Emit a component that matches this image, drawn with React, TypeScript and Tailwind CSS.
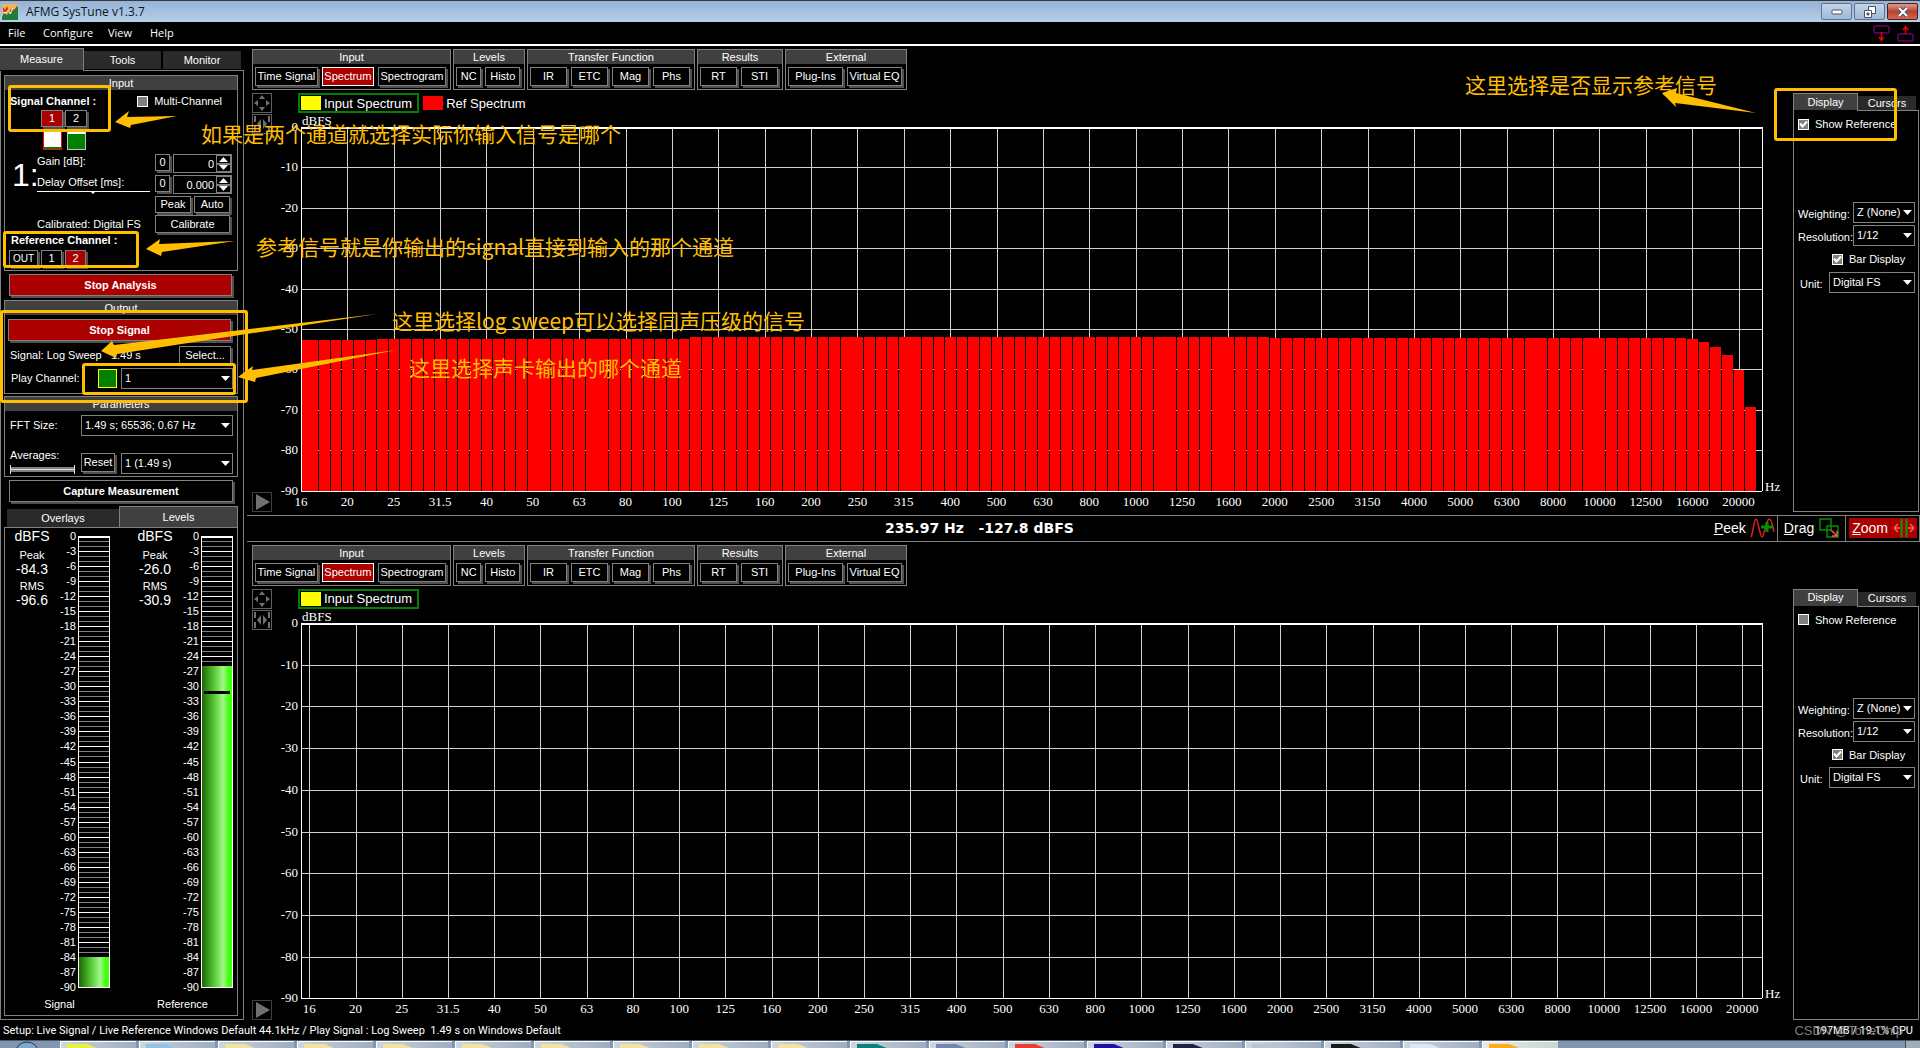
import React, { useId } from "react";

const FREQS = [
  "16", "20", "25", "31.5", "40", "50", "63", "80", "100", "125", "160", "200", "250", "315", "400", "500",
  "630", "800", "1000", "1250", "1600", "2000", "2500", "3150", "4000", "5000", "6300", "8000", "10000",
  "12500", "16000", "20000",
];

const TOOL_GROUPS = [
  { title: "Input", width: "w-[199px]", button: "flex-auto", buttons: ["Time Signal", "Spectrum", "Spectrogram"] },
  { title: "Levels", width: "w-[72px]", button: "flex-auto", buttons: ["NC", "Histo"] },
  { title: "Transfer Function", width: "w-[168px]", button: "flex-1", buttons: ["IR", "ETC", "Mag", "Phs"] },
  { title: "Results", width: "w-[86px]", button: "flex-1", buttons: ["RT", "STI"] },
  { title: "External", width: "w-[122px]", button: "flex-1", buttons: ["Plug-Ins", "Virtual EQ"] },
];

// 1/12 octave levels in dBFS, the band rolls off at the top end
const ROLL_OFF = [-52.5, -53.2, -54.5, -56.5, -60.2, -69.3];
const REF_LEVELS = Array.from({ length: 126 }, (_, i) => {
  if (i >= 120) return ROLL_OFF[i - 120];
  if (i < 7) return -52.8;
  if (i < 34) return -52.4;
  return i < 84 ? -52.1 : -52.3;
});

type ButtonProps = {
  children: React.ReactNode;
  active?: boolean;
  className?: string;
};

function Button({ children, active = false, className = "" }: ButtonProps) {
  return (
    <button
      type="button"
      className={`flex items-center justify-center whitespace-nowrap border border-[#808080] leading-none shadow-[2px_2px_0_#505050] ${
        active ? "bg-[#aa0000]" : "bg-black"
      } ${className}`}
    >
      {children}
    </button>
  );
}

type SelectProps = {
  id: string;
  value: string;
  className?: string;
};

function Select({ id, value, className = "" }: SelectProps) {
  return (
    <span className={`relative block h-[21px] ${className}`}>
      <select
        id={id}
        defaultValue={value}
        className="block h-full w-full appearance-none border border-[#808080] bg-black pl-[3px] text-[11px] leading-none text-white"
      >
        <option>{value}</option>
      </select>
      <svg className="pointer-events-none absolute right-[3px] top-[8px]" width="9" height="5" viewBox="0 0 9 5">
        <path d="M0 0h9L4.500 5z" fill="#fff" />
      </svg>
    </span>
  );
}

function Checkbox({ label, checked = false }: { label: string; checked?: boolean }) {
  return (
    <label className="flex items-center gap-[6px] whitespace-nowrap">
      <span className="relative block size-[11px]">
        <input
          type="checkbox"
          defaultChecked={checked}
          className="peer block size-[11px] appearance-none border border-white bg-[#808080]"
        />
        <svg
          className="pointer-events-none absolute left-0 top-0 hidden peer-checked:block"
          width="11"
          height="11"
          viewBox="0 0 11 11"
        >
          <path d="M2 4.500l2.500 3 4.500-5" fill="none" stroke="#fff" strokeWidth="2" />
        </svg>
      </span>
      {label}
    </label>
  );
}

function Group({ title, className = "", children }: { title: string; className?: string; children: React.ReactNode }) {
  return (
    <fieldset className={`min-w-0 border border-[#808080] ${className}`}>
      <div className="h-[14px] bg-[#404040] text-center leading-[14px]">{title}</div>
      {children}
    </fieldset>
  );
}

function TitleBar() {
  return (
    <header className="flex h-[22px] shrink-0 items-center border-t border-[#3a3a3a] bg-linear-to-b from-[#96b3d6] to-[#b6cfe9] pl-[2px] font-['Open_Sans',sans-serif] text-[12px] text-[#10151c]">
      <svg width="16" height="16" viewBox="0 0 16 16">
        <rect width="16" height="16" rx="2" fill="#f3b25c" />
        <path d="M1 3l2 3 2-4 2 6 2-3 2 2 4-5v6H1z" fill="#d3321d" />
        <path d="M0 13l2-4 3 2 2-4 2 3 2-5 2 2 2-5 1 2v12H0z" fill="#1e7d3a" />
        <path d="M1 8l3 1 2-3 2 4 3-6" fill="none" stroke="#fff3c9" />
      </svg>
      <h1 className="ml-[8px]">AFMG SysTune v1.3.7</h1>
      <div className="ml-auto mr-[2px] flex gap-[2px]">
        <button type="button" aria-label="Minimize" className="flex h-[17px] w-[31px] items-center justify-center rounded-[2px] border border-[#5d7390] bg-linear-to-b from-[#c3d5e9] to-[#9db8d6]">
          <svg width="12" height="6" viewBox="0 0 12 6">
            <rect x="1" y="1" width="10" height="4" rx="1" fill="#fff" stroke="#4b5260" />
          </svg>
        </button>
        <button type="button" aria-label="Restore" className="flex h-[17px] w-[31px] items-center justify-center rounded-[2px] border border-[#5d7390] bg-linear-to-b from-[#c3d5e9] to-[#9db8d6]">
          <svg width="12" height="12" viewBox="0 0 12 12" fill="#fff" stroke="#4b5260">
            <path d="M4.500 .500h7v7h-7z" />
            <path d="M.500 4.500h7v7h-7z" />
            <path d="M3 7h2v2H3z" fill="#7f99b8" />
          </svg>
        </button>
        <button type="button" aria-label="Close" className="flex h-[17px] w-[31px] items-center justify-center rounded-[2px] border border-[#4d1a22] bg-linear-to-b from-[#dd9a8b] via-[#b8432c] to-[#cf6b4d]">
          <svg width="12" height="10" viewBox="0 0 12 10">
            <path d="M2 1l8 8M10 1L2 9" stroke="#4b5260" strokeWidth="4" />
            <path d="M2 1l8 8M10 1L2 9" stroke="#fff" strokeWidth="2" />
          </svg>
        </button>
      </div>
    </header>
  );
}

function MenuBar() {
  return (
    <nav className="flex h-6 shrink-0 items-center border-b-2 border-white pl-2 pr-[6px] font-['Open_Sans',sans-serif] text-[11px]">
      <button type="button" className="w-[35px] text-left">File</button>
      <button type="button" className="w-[65px] text-left">Configure</button>
      <button type="button" className="w-[42px] text-left">View</button>
      <button type="button" className="text-left">Help</button>
      <div className="ml-auto flex gap-[7px]">
        <button type="button" aria-label="Load setup">
          <svg width="17" height="17" viewBox="0 0 17 17" fill="none">
            <rect x="1" y="1" width="15" height="7" rx="1" stroke="#a000a0" />
            <path d="M8.500 7v8M6 12l2.500 3.500L11 12" stroke="#e00000" strokeWidth="1.500" />
          </svg>
        </button>
        <button type="button" aria-label="Save setup">
          <svg width="17" height="17" viewBox="0 0 17 17" fill="none">
            <rect x="1" y="9" width="15" height="7" rx="1" stroke="#a000a0" />
            <path d="M8.500 9V2M6 5l2.500-3.500L11 5" stroke="#e00000" strokeWidth="1.500" />
          </svg>
        </button>
      </div>
    </nav>
  );
}

function Spinner({ label, value }: { label: string; value: string }) {
  return (
    <div className="flex gap-[3px]">
      <Button className="h-[17px] w-[15px]">0</Button>
      <div className="flex h-[19px] w-[59px] border border-[#808080]">
        <input
          aria-label={label}
          defaultValue={value}
          className="w-[42px] bg-black pr-[2px] text-right leading-none text-white"
        />
        <div className="flex flex-col">
          <button type="button" aria-label={`${label} up`} className="flex h-[9px] w-[15px] items-center justify-center border border-[#808080]">
            <svg width="9" height="5" viewBox="0 0 9 5"><path d="M0 5h9L4.500 0z" fill="#fff" /></svg>
          </button>
          <button type="button" aria-label={`${label} down`} className="flex h-[9px] w-[15px] items-center justify-center border border-[#808080]">
            <svg width="9" height="5" viewBox="0 0 9 5"><path d="M0 0h9L4.500 5z" fill="#fff" /></svg>
          </button>
        </div>
      </div>
    </div>
  );
}

function InputPanel() {
  return (
    <Group title="Input" className="h-[196px]">
      <div className="flex h-[20px] items-center justify-between pl-[5px] pr-[15px] pt-[2px]">
        <span className="font-bold">Signal Channel :</span>
        <Checkbox label="Multi-Channel" />
      </div>
      <div className="flex gap-[2px] pl-9">
        <Button active className="h-[17px] w-[22px]">1</Button>
        <Button className="h-[17px] w-[22px]">2</Button>
      </div>
      <div className="mt-[4px] flex gap-[5px] pl-[38px]">
        <span className="flex size-[19px] flex-col justify-end border border-[#ff0000] bg-white">
          <span className="h-[2px] bg-[#008000]" />
        </span>
        <span className="size-[19px] border border-[#c0c0c0] border-t-[3px] border-t-white bg-[#008000]" />
      </div>
      <div className="mt-[4px] flex">
        <span className="w-[32px] pl-[7px] pt-[5px] text-[32px] leading-8">1:</span>
        <div className="w-[113px]">
          <p className="mt-px leading-[13px]">Gain [dB]:</p>
          <p className="mt-[8px] leading-[13px]">Delay Offset [ms]:</p>
          <svg className="mt-[2px] block" width="113" height="4" viewBox="0 0 113 4">
            <path d="M0 0h113v1H0zM54 1h4l-2 2z" fill="#fff" />
          </svg>
          <p className="mt-[23px] whitespace-nowrap leading-[13px]">Calibrated: Digital FS</p>
        </div>
        <div className="ml-[5px] flex flex-col gap-[2px]">
          <Spinner label="Gain" value="0" />
          <Spinner label="Delay offset" value="0.000" />
          <div className="flex gap-[3px]">
            <Button className="h-[17px] w-[36px]">Peak</Button>
            <Button className="h-[17px] w-[36px]">Auto</Button>
          </div>
          <Button className="h-[18px] w-[75px]">Calibrate</Button>
        </div>
      </div>
      <p className="pl-[6px] font-bold leading-[14px]">Reference Channel :</p>
      <div className="mt-[3px] flex gap-[3px] pl-1">
        <Button className="h-[17px] w-[29px] text-[10px]">OUT</Button>
        <Button className="h-[17px] w-[21px]">1</Button>
        <Button active className="h-[17px] w-[21px]">2</Button>
      </div>
    </Group>
  );
}

function OutputPanel() {
  return (
    <Group title="Output" className="mt-[4px] h-[94px]">
      <div className="px-[3px] pt-[4px]">
        <Button active className="h-[22px] w-[223px] font-bold">Stop Signal</Button>
      </div>
      <div className="mt-[5px] flex items-center justify-between pl-[5px] pr-[6px]">
        <span>Signal: Log Sweep&nbsp;&nbsp; 1.49 s</span>
        <Button className="h-[18px] w-[52px]">Select...</Button>
      </div>
      <div className="mt-[4px] flex items-center pl-[6px]">
        <label htmlFor="play-channel" className="w-[87px]">Play Channel:</label>
        <span className="size-[19px] border border-[#ffff00] bg-[#008000]" />
        <Select id="play-channel" value="1" className="ml-[4px] w-[112px]" />
      </div>
    </Group>
  );
}

function ParametersPanel() {
  return (
    <Group title="Parameters" className="mt-[2px] h-[81px]">
      <div className="mt-[4px] flex items-center pl-[5px]">
        <label htmlFor="fft-size" className="w-[71px]">FFT Size:</label>
        <Select id="fft-size" value="1.49 s; 65536; 0.67 Hz" className="w-[152px]" />
      </div>
      <div className="mt-[11px] flex items-end pl-[5px]">
        <div className="w-[71px]">
          <label htmlFor="averages">Averages:</label>
          <svg className="mt-px block" width="65" height="9" viewBox="0 0 65 9">
            <path d="M0 2h65v5H0z" fill="#808080" />
            <path d="M0 4h65v1H0zM0 0h1v9H0zM64 0h1v9h-1z" fill="#e0e0e0" />
          </svg>
        </div>
        <Button className="mb-[2px] h-[19px] w-[34px]">Reset</Button>
        <Select id="averages" value="1 (1.49 s)" className="ml-[6px] w-[112px]" />
      </div>
    </Group>
  );
}

type MeterProps = {
  name: string;
  peak: string;
  rms: string;
  level: number;
  mark?: number;
};

function Meter({ name, peak, rms, level, mark }: MeterProps) {
  const gradient = useId();
  const pct = (db: number) => `${(-db / 90) * 100}%`;
  return (
    <div className="flex w-[109px] flex-col">
      <div className="flex min-h-0 flex-1 pt-[8px]">
        <dl className="w-[54px] text-center">
          <dt className="-mt-[8px] text-[14px] leading-4">dBFS</dt>
          <dt className="mt-[5px] leading-3">Peak</dt>
          <dd className="text-[14px] leading-4">{peak}</dd>
          <dt className="mt-[3px] leading-3">RMS</dt>
          <dd className="text-[14px] leading-4">{rms}</dd>
        </dl>
        <svg className="h-full w-[52px] overflow-visible" shapeRendering="crispEdges">
          <defs>
            <linearGradient id={gradient}>
              <stop offset="0" stopColor="#1d6608" />
              <stop offset=".4" stopColor="#55c832" />
              <stop offset=".7" stopColor="#a4f78c" />
              <stop offset=".88" stopColor="#44ff11" />
            </linearGradient>
          </defs>
          {Array.from({ length: 91 }, (_, i) => (
            <rect key={i} x="20" y={pct(-i)} width="30" height="1" fill={i % 3 === 0 ? "#fff" : "#808080"} />
          ))}
          <rect x="20" y={pct(level)} width="30" height={`${((90 + level) / 90) * 100}%`} fill={`url(#${gradient})`} />
          {mark !== undefined && <rect x="22" y={pct(mark)} width="26" height="3" fill="#000" />}
          <rect x="19" y="0" width="1" height="100%" fill="#fff" />
          <rect x="50" y="0" width="1" height="100%" fill="#fff" />
          <rect x="19" y="0" width="32" height="2" fill="#fff" />
          <rect x="19" y="100%" width="32" height="1" fill="#fff" />
          {Array.from({ length: 31 }, (_, i) => (
            <text key={i} x="17" y={pct(-i * 3)} dy="4" textAnchor="end" fill="#fff">
              {i === 0 ? "0" : -i * 3}
            </text>
          ))}
        </svg>
      </div>
      <p className="h-[28px] pt-[10px] text-center leading-[14px]">{name}</p>
    </div>
  );
}

function Sidebar() {
  return (
    <aside className="flex w-[244px] shrink-0 flex-col pt-[2px]">
      <div role="tablist" className="flex items-end">
        <button type="button" role="tab" aria-selected="true" className="h-[22px] w-[84px] border-r border-t border-[#808080] bg-[#404040]">Measure</button>
        <button type="button" role="tab" aria-selected="false" className="mb-px h-[18px] w-[77px] bg-[#2a2a2a]">Tools</button>
        <button type="button" role="tab" aria-selected="false" className="mb-px ml-[2px] h-[18px] w-[78px] bg-[#2a2a2a]">Monitor</button>
      </div>
      <div className="flex">
        <span className="w-[83px]" />
        <span className="h-px flex-1 bg-[#808080]" />
      </div>
      <div className="flex min-h-0 flex-1 flex-col border border-t-0 border-[#808080] pb-[3px] pl-[3px] pr-[5px] pt-[4px]">
        <InputPanel />
        <Button active className="ml-[5px] mt-[3px] h-[22px] w-[223px] shrink-0 font-bold">Stop Analysis</Button>
        <OutputPanel />
        <ParametersPanel />
        <Button className="ml-[5px] mt-[3px] h-[22px] w-[224px] shrink-0 font-bold">Capture Measurement</Button>
        <div role="tablist" className="mt-[4px] flex items-end">
          <button type="button" role="tab" aria-selected="false" className="ml-[3px] h-[18px] w-[112px] bg-[#2a2a2a]">Overlays</button>
          <button type="button" role="tab" aria-selected="true" className="h-[21px] flex-1 border border-b-0 border-[#808080] bg-[#404040]">Levels</button>
        </div>
        <div className="flex min-h-0 flex-1 gap-[14px] border border-[#808080]">
          <Meter name="Signal" peak="-84.3" rms="-96.6" level={-84} />
          <Meter name="Reference" peak="-26.0" rms="-30.9" level={-26} mark={-30.9} />
        </div>
      </div>
    </aside>
  );
}

function Toolbar() {
  return (
    <div className="flex gap-[2px]">
      {TOOL_GROUPS.map((group) => (
        <Group key={group.title} title={group.title} className={`h-[41px] ${group.width}`}>
          <div className="flex gap-[4px] pl-[2px] pr-[4px] pt-[3px]">
            {group.buttons.map((name) =>
              name === "Spectrum" ? (
                <button key={name} type="button" aria-pressed="true" className="h-[19px] flex-auto border border-white bg-[#aa0000] leading-none">
                  {name}
                </button>
              ) : (
                <Button key={name} className={`h-[19px] ${group.button}`}>{name}</Button>
              )
            )}
          </div>
        </Group>
      ))}
    </div>
  );
}

type PlotProps = {
  inset: number;
  levels?: number[];
};

function Plot({ inset, levels }: PlotProps) {
  // inset is where the 16 Hz line sits, as a share of the plot width
  const step = levels ? 3.174 : 3.164;
  const x = (band: number) => `${inset + band * step}%`;
  const y = (db: number) => `${(-db / 90) * 100}%`;
  return (
    <svg
      className="block h-full w-full overflow-visible font-['Liberation_Serif',serif] text-[13px]"
      shapeRendering="crispEdges"
    >
      {FREQS.map((f, i) => (
        <rect key={f} x={x(i)} y="0" width="1" height="100%" fill="#d0d0d0" />
      ))}
      {Array.from({ length: 10 }, (_, i) => (
        <g key={i}>
          <rect x="0" y={y(-i * 10)} width="100%" height="1" fill="#d0d0d0" />
          <text x="-3" y={y(-i * 10)} dy="4" textAnchor="end" fill="#fff">
            {i === 0 ? "0" : -i * 10}
          </text>
        </g>
      ))}
      {levels?.map((db, i) => (
        <rect
          key={i}
          x={i === 0 ? "0" : `${(i - 0.43) * (step / 4)}%`}
          y={y(db)}
          width={i === 0 ? "0.45%" : "0.73%"}
          height={`${((90 + db) / 90) * 100}%`}
          fill="#ff0000"
        />
      ))}
      <rect x="0" y="0" width="100%" height="2" fill="#fff" />
      <rect x="0" y="0" width="1" height="100%" fill="#fff" />
      <rect x="100%" y="0" width="1" height="100%" fill="#fff" />
      <rect x="0" y="100%" width="100%" height="1" fill="#fff" />
      {FREQS.map((f, i) => (
        <text key={f} x={x(i)} y="100%" dy="15" textAnchor="middle" fill="#fff">
          {f}
        </text>
      ))}
      <text x="1" y="-2" fill="#fff">dBFS</text>
      <text x="100%" y="100%" dx="3" fill="#fff">Hz</text>
    </svg>
  );
}

function DisplayPanel({ id, showReference }: { id: string; showReference: boolean }) {
  return (
    <aside className="flex w-[126px] shrink-0 flex-col pt-[3px]">
      <div role="tablist" className="flex items-end">
        <button type="button" role="tab" aria-selected="true" className="h-[17px] w-[65px] border border-b-0 border-[#808080] bg-[#404040] leading-none">Display</button>
        <button type="button" role="tab" aria-selected="false" className="h-[14px] w-[58px] bg-[#2a2a2a] leading-none">Cursors</button>
      </div>
      <div className="flex">
        <span className="w-[64px] border-l border-[#808080]" />
        <span className="h-px flex-1 bg-[#808080]" />
      </div>
      <div className="flex-1 border border-t-0 border-[#808080] pl-[4px] pr-[3px]">
        <div className="flex h-[91px] pt-[5px]">
          <div className="h-[16px]">
            <Checkbox label="Show Reference" checked={showReference} />
          </div>
        </div>
        <div className="flex items-center">
          <label htmlFor={`${id}-weighting`} className="w-[55px] pt-[4px]">Weighting:</label>
          <Select id={`${id}-weighting`} value="Z (None)" className="flex-1" />
        </div>
        <div className="mt-[2px] flex items-center">
          <label htmlFor={`${id}-resolution`} className="w-[55px] whitespace-nowrap pt-[4px]">Resolution:</label>
          <Select id={`${id}-resolution`} value="1/12" className="flex-1" />
        </div>
        <div className="mt-[5px] pl-[34px]">
          <Checkbox label="Bar Display" checked />
        </div>
        <div className="mt-[4px] flex items-center">
          <label htmlFor={`${id}-unit`} className="w-[31px] pl-[2px] pt-[4px]">Unit:</label>
          <Select id={`${id}-unit`} value="Digital FS" className="flex-1" />
        </div>
      </div>
    </aside>
  );
}

type ViewProps = {
  id: string;
  inset: number;
  levels?: number[];
  className?: string;
};

function AnalysisView({ id, inset, levels, className = "" }: ViewProps) {
  return (
    <section className={`flex min-h-0 basis-0 flex-col pl-[5px] pt-[3px] ${className}`}>
      <Toolbar />
      <div className="flex min-h-0 flex-1">
        <div className="flex w-[20px] shrink-0 flex-col gap-px pt-[3px]">
          <button type="button" aria-label="Move view" className="border border-[#606060]">
            <svg width="18" height="18" viewBox="0 0 18 18" fill="#707070">
              <path d="M9 1l3 4H6zM9 17l3-4H6zM1 9l4-3v6zM17 9l-4-3v6z" />
            </svg>
          </button>
          <button type="button" aria-label="Fit view" className="border border-[#606060]">
            <svg width="18" height="18" viewBox="0 0 18 18" fill="#707070">
              <path d="M1 1h2v6H1zM1 11h2v6H1zM15 1h2v6h-2zM15 11h2v6h-2zM8 4v10L4 9zM10 4v10l4-5z" />
            </svg>
          </button>
          <button type="button" aria-label="Play" className={`mt-auto border border-[#404040] ${levels ? "mb-[3px]" : ""}`}>
            <svg width="18" height="18" viewBox="0 0 18 18">
              <path d="M3 1l14 8-14 8z" fill="#707070" />
            </svg>
          </button>
        </div>
        <div className={`flex min-w-0 flex-1 flex-col pl-[29px] ${levels ? "pb-[24px]" : "pb-[22px]"}`}>
          <div className="-ml-[3px] flex h-[37px] gap-[4px] pt-[3px] text-[13px] leading-none">
            <span className="flex h-[20px] items-center gap-[3px] border-2 border-[#008000] pl-px pr-[5px]">
              <span className="h-[14px] w-[20px] bg-[#ffff00]" />
              Input Spectrum
            </span>
            {levels && (
              <span className="flex h-[20px] items-center gap-[3px]">
                <span className="h-[14px] w-[20px] bg-[#ff0000]" />
                Ref Spectrum
              </span>
            )}
          </div>
          <div className="min-h-0 flex-1">
            <Plot inset={inset} levels={levels} />
          </div>
        </div>
        <div className={`flex pl-[31px] pr-px ${levels ? "pb-[3px]" : ""}`}>
          <DisplayPanel id={id} showReference={Boolean(levels)} />
        </div>
      </div>
    </section>
  );
}

function Readout() {
  return (
    <div className="flex h-[27px] shrink-0 items-center border-y border-[#808080] text-[14px]">
      <output className="flex-1 whitespace-pre text-center font-['DejaVu_Sans',sans-serif] font-bold">
        235.97 Hz   -127.8 dBFS
      </output>
      <div className="flex h-full items-center">
        <button type="button" className="flex h-full items-center gap-[4px] border-r border-[#808080] px-[2px]">
          <span><u>P</u>eek</span>
          <svg width="25" height="20" viewBox="0 0 25 20" fill="none">
            <path d="M1 19C3 16 4 1 6 1s4 18 6 18 4-17 7-18c3 0 4 8 5 13" stroke="#e02020" strokeWidth="1.500" />
            <path d="M17 4v10M11 9h12" stroke="#009000" strokeWidth="3" />
          </svg>
        </button>
        <button type="button" className="flex h-full items-center gap-[5px] border-r border-[#808080] px-[6px]">
          <span><u>D</u>rag</span>
          <svg width="20" height="20" viewBox="0 0 20 20" fill="none">
            <path d="M1 1h11v11H1zM8 8h11v11H8z" stroke="#009000" strokeWidth="1.500" />
            <path d="M12 12l6 6M18 13v5h-5" stroke="#ff5050" strokeWidth="1.500" />
          </svg>
        </button>
        <div className="flex h-full items-center border-r border-[#808080] pl-[3px] pr-[2px]">
          <button type="button" className="flex h-[20px] items-center gap-[6px] bg-[#aa0000] px-[3px]">
            <span><u>Z</u>oom</span>
            <svg width="20" height="18" viewBox="0 0 20 18" fill="none">
              <path d="M7.500 0v18M12.500 0v18" stroke="#00a000" strokeWidth="2" />
              <path d="M6 9H0M4 5L0 9l4 4M14 9h6M16 5l4 4-4 4" stroke="#ff6060" strokeWidth="1.500" />
            </svg>
          </button>
        </div>
      </div>
    </div>
  );
}

function StatusBar() {
  return (
    <footer className="flex h-[20px] shrink-0 items-center justify-between pl-[3px] pr-[7px] pt-[3px] font-[Roboto,sans-serif] text-[11px]">
      <span>Setup: Live Signal / Live Reference Windows Default 44.1kHz / Play Signal : Log Sweep&nbsp; 1.49 s on Windows Default</span>
      <span>197MB / 19.1% CPU</span>
    </footer>
  );
}

const TASK_ICONS = [
  "#e8f040", "#8fc3e8", "#f4e3a0", "#f4e3a0", "#f4e3a0", "#f4e3a0", "#f4e3a0", "#f4e3a0", "#f4e3a0", "#f4e3a0",
  "#0b8080", "#7088b0", "#e84030", "#2010a0", "#202040", "#b9c4d2", "#181818", "#d8e8f8", "#ffa820",
];

function Taskbar() {
  return (
    <div className="flex h-[8px] shrink-0 overflow-hidden border-t border-[#4c5a6e] bg-[#8296b0]">
      <svg className="w-[60px] shrink-0" height="7">
        <circle cx="27" cy="13" r="12" fill="#7fa8cc" stroke="#20344c" />
      </svg>
      {TASK_ICONS.map((icon, i) => (
        <span
          key={i}
          className={`mr-[3px] h-full w-[76px] shrink-0 border-l border-t border-white bg-linear-to-r pl-[6px] pt-[2px] ${
            i === TASK_ICONS.length - 1 ? "from-[#e4ece8] to-[#c8d6d2]" : "from-[#cdd5df] to-[#9fadc0]"
          }`}
        >
          <svg className="block" width="32" height="5">
            <path d="M0 0h20l12 5H0z" fill={icon} />
          </svg>
        </span>
      ))}
      <span className="ml-auto w-[15px] border-l border-[#404c5c] bg-[#a0acb8]" />
    </div>
  );
}

// Hand-placed notes drawn over the application window
function Annotations() {
  const box = "absolute rounded-[3px] border-[3px] border-[#ffbf00]";
  const note = "absolute whitespace-nowrap leading-6";
  return (
    <div className="pointer-events-none absolute inset-0 overflow-hidden font-['Noto_Sans_CJK_SC',sans-serif] text-[21px] text-[#ffbf00]">
      <div className={`${box} left-[8px] top-[85px] h-[47px] w-[103px]`} />
      <div className={`${box} left-[3px] top-[231px] h-[37px] w-[136px]`} />
      <div className={`${box} left-0 top-[310px] h-[93px] w-[248px]`} />
      <div className={`${box} left-[82px] top-[363px] h-[32px] w-[154px]`} />
      <div className={`${box} right-[23px] top-[88px] h-[53px] w-[123px]`} />
      <svg className="absolute left-0 top-0" width="400" height="400" fill="#ffbf00">
        <path d="M115 122l14-11-2 6 50-1-46 9-1 3z" />
        <path d="M146 249l14-10-1 5 76-3-73 11-1 4z" />
        <path d="M101 351l11-10 2 4 263-31-260 40-1 4z" />
        <path d="M238 377l15-11-1 4 144-20-140 28-1 4z" />
      </svg>
      <svg className="absolute right-[160px] top-[84px]" width="100" height="34" fill="#ffbf00">
        <path d="M2 9l15-5-1 5 80 20-81-10 1 4z" />
      </svg>
      <p className={`${note} left-[201px] top-[121px]`}>如果是两个通道就选择实际你输入信号是哪个</p>
      <p className={`${note} left-[256px] top-[234px]`}>参考信号就是你输出的signal直接到输入的那个通道</p>
      <p className={`${note} left-[392px] top-[308px]`}>这里选择log sweep可以选择同声压级的信号</p>
      <p className={`${note} left-[409px] top-[355px]`}>这里选择声卡输出的哪个通道</p>
      <p className={`${note} right-[203px] top-[72px]`}>这里选择是否显示参考信号</p>
      <p className="absolute bottom-[9px] right-[17px] font-['Liberation_Sans',sans-serif] text-[13px] leading-4 text-[#a0a0a0]/80">
        CSDN @ToneChip
      </p>
    </div>
  );
}

export default function App() {
  return (
    <div className="relative flex h-screen min-h-[900px] min-w-[1200px] flex-col overflow-hidden bg-black font-['Liberation_Sans',sans-serif] text-[11px] text-white">
      <TitleBar />
      <MenuBar />
      <div className="flex min-h-0 flex-1">
        <Sidebar />
        <main className="flex min-w-0 flex-1 flex-col pl-[3px]">
          <AnalysisView id="top" inset={0} levels={REF_LEVELS} className="grow-[469]" />
          <Readout />
          <AnalysisView id="bottom" inset={0.57} className="grow-[479]" />
        </main>
      </div>
      <StatusBar />
      <Taskbar />
      <Annotations />
    </div>
  );
}
